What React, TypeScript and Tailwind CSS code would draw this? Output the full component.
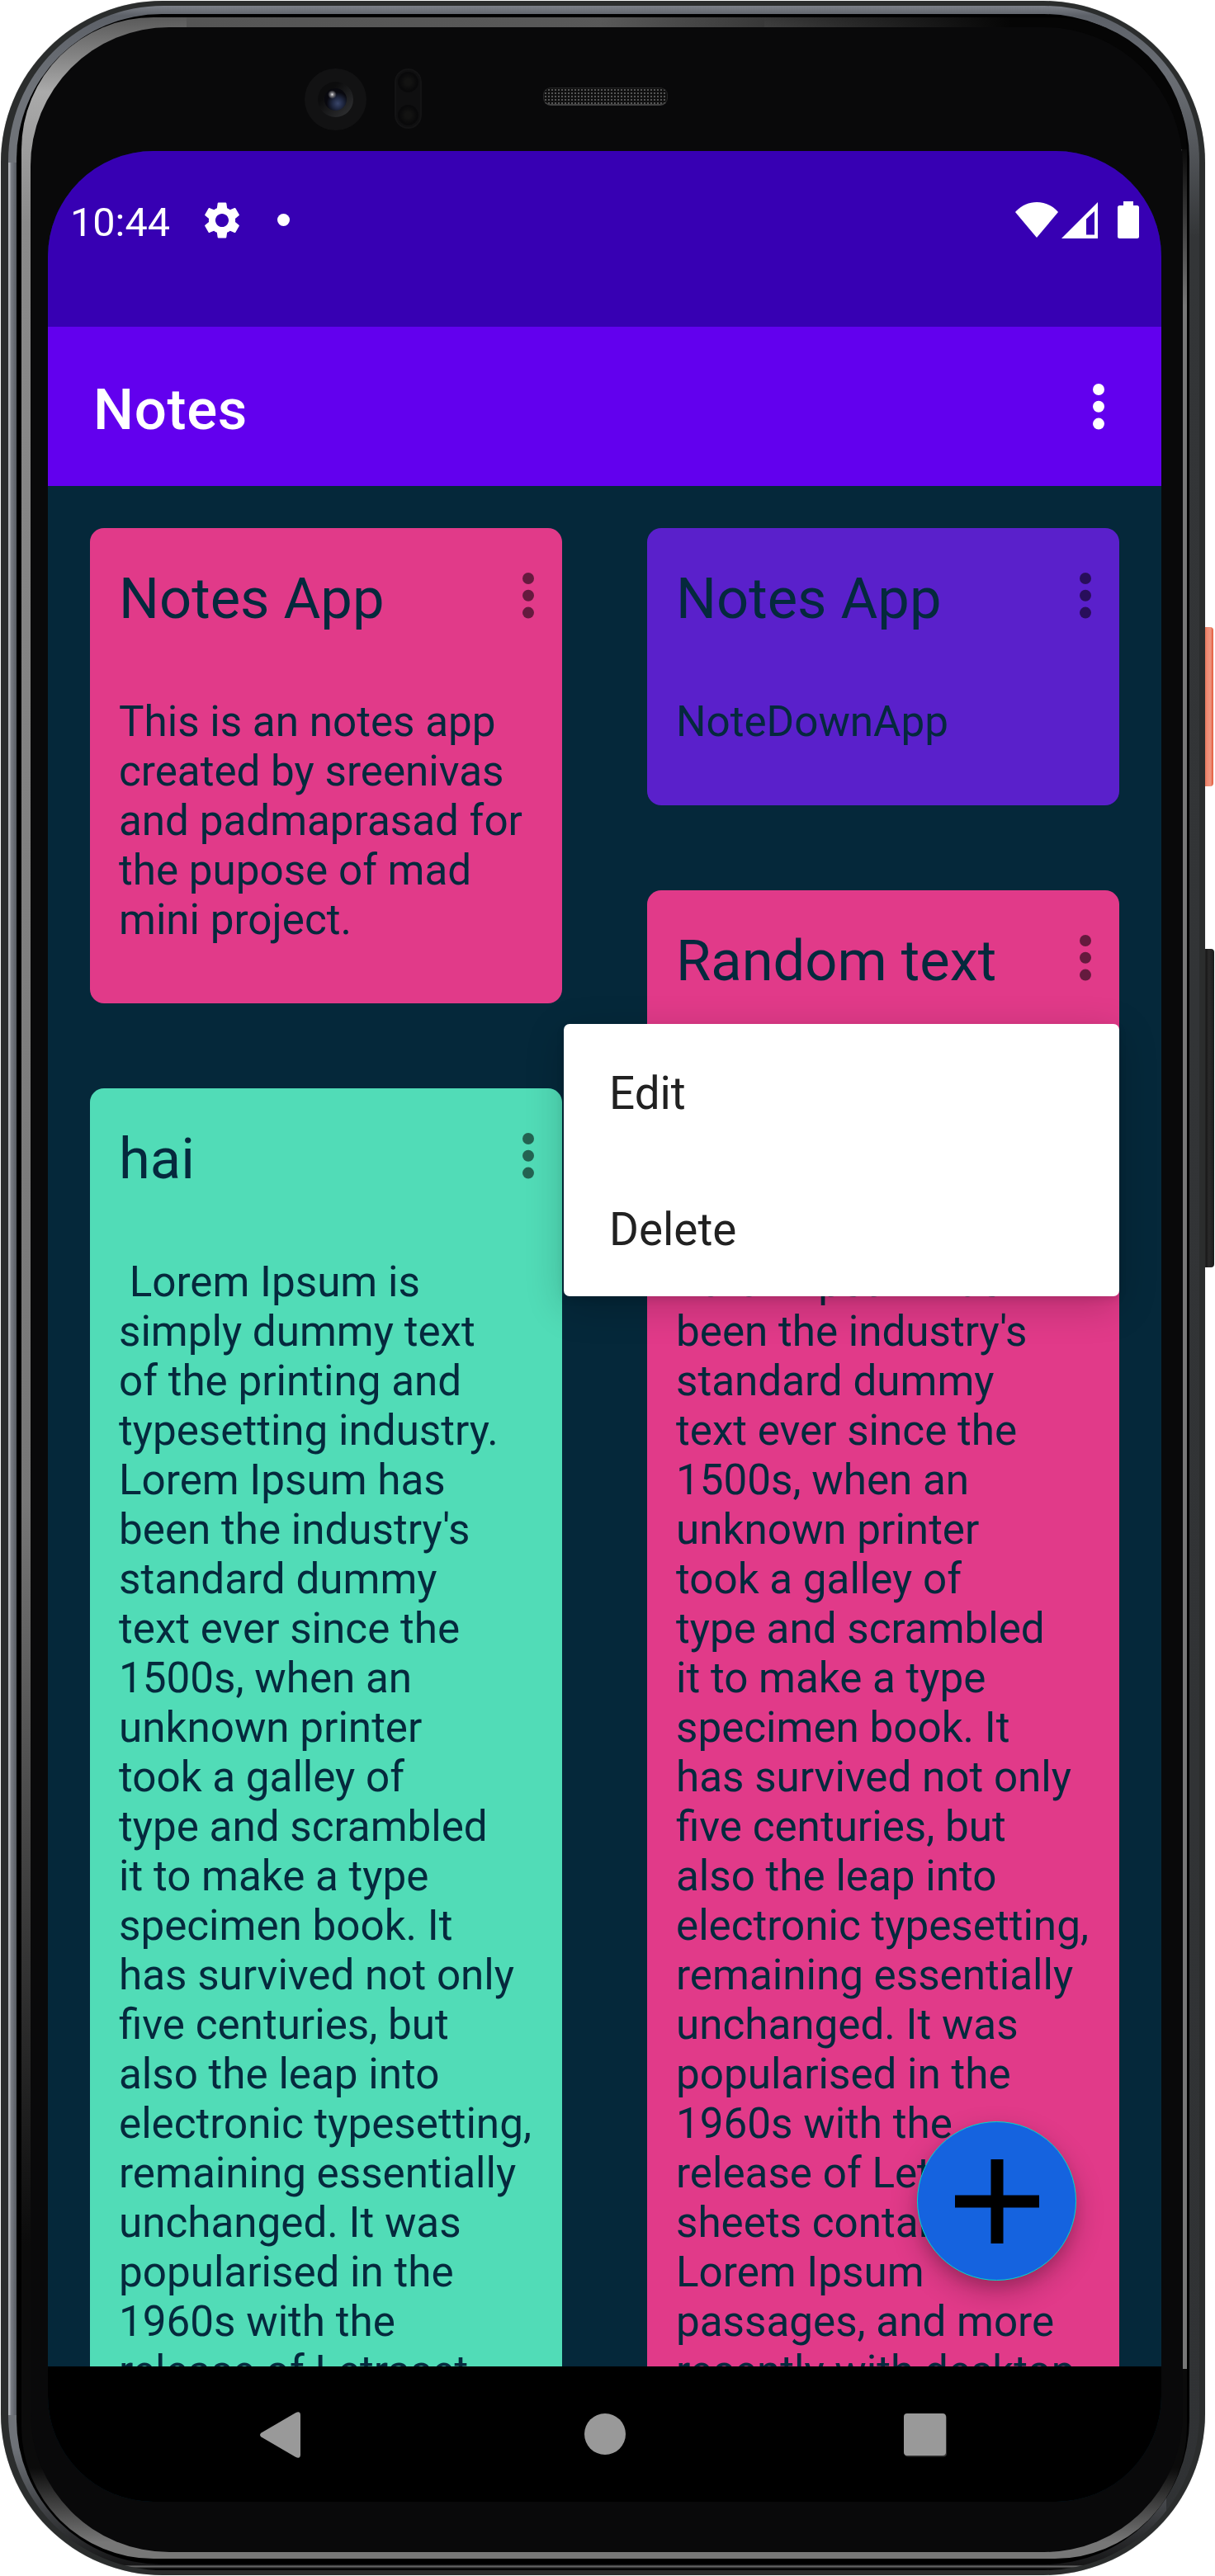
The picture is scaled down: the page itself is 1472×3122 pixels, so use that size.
import React from "react";

const lorem = [
  " Lorem Ipsum is",
  "simply dummy text",
  "of the printing and",
  "typesetting industry.",
  "Lorem Ipsum has",
  "been the industry's",
  "standard dummy",
  "text ever since the",
  "1500s, when an",
  "unknown printer",
  "took a galley of",
  "type and scrambled",
  "it to make a type",
  "specimen book. It",
  "has survived not only",
  "five centuries, but",
  "also the leap into",
  "electronic typesetting,",
  "remaining essentially",
  "unchanged. It was",
  "popularised in the",
  "1960s with the",
  "release of Letraset",
  "sheets containing",
  "Lorem Ipsum",
  "passages, and more",
  "recently with desktop",
];

function Dots({ className }: { className: string }) {
  return (
    <svg viewBox="0 0 14 56" className={className} fill="currentColor">
      <circle cx="7" cy="7" r="7" />
      <circle cx="7" cy="27.8" r="7" />
      <circle cx="7" cy="48.6" r="7" />
    </svg>
  );
}

function NoteCard({ title, lines, color }: { title: string; lines: string[]; color: string }) {
  return (
    <article className={`flex shrink-0 flex-col rounded-[17px] pt-[45px] pb-[71px] pl-[35px] ${color}`}>
      <header className="flex h-20 items-start justify-between pr-[34px]">
        <h2 className="pt-px text-[68.7px] leading-[80px] whitespace-nowrap">{title}</h2>
        <Dots className="mt-[9px] h-14 w-3.5 text-black/55" />
      </header>
      <div className="mt-[80px] text-[51.2px] leading-[60px] whitespace-pre">
        {lines.map((line, i) => (
          <p key={i}>{line}</p>
        ))}
      </div>
    </article>
  );
}

function StatusBar() {
  return (
    <div className="flex h-[213px] shrink-0 items-start bg-[#3700b3] pt-[57px] pl-[27px] text-white">
      <span className="w-[124px] pt-px text-[48.6px] leading-[58px]">10:44</span>
      <svg viewBox="2.6 2.4 18.8 19.2" className="mt-[5px] ml-[39px] h-11 w-[42px]" fill="currentColor">
        <path d="M19.14 12.94c.04-.3.06-.61.06-.94 0-.32-.02-.64-.07-.94l2.03-1.58a.49.49 0 0 0 .12-.61l-1.92-3.32a.488.488 0 0 0-.59-.22l-2.39.96c-.5-.38-1.03-.7-1.62-.94l-.36-2.54a.484.484 0 0 0-.48-.41h-3.84c-.24 0-.43.17-.47.41l-.36 2.54c-.59.24-1.13.57-1.62.94l-2.39-.96c-.22-.08-.47 0-.59.22L2.74 8.87c-.12.21-.08.47.12.61l2.03 1.58c-.05.3-.09.63-.09.94s.02.64.07.94l-2.03 1.58a.49.49 0 0 0-.12.61l1.92 3.32c.12.22.37.29.59.22l2.39-.96c.5.38 1.03.7 1.62.94l.36 2.54c.05.24.24.41.48.41h3.84c.24 0 .44-.17.47-.41l.36-2.54c.59-.24 1.13-.56 1.62-.94l2.39.96c.22.08.47 0 .59-.22l1.92-3.32c.12-.22.07-.47-.12-.61l-2.01-1.58zM12 15.6c-1.98 0-3.6-1.62-3.6-3.6s1.62-3.6 3.6-3.6 3.6 1.62 3.6 3.6-1.62 3.6-3.6 3.6z" />
      </svg>
      <span className="mt-[19px] ml-[46px] size-[15px] rounded-full bg-white" />
      <svg viewBox="0 0 52 43" className="mt-[5px] ml-auto h-[43px] w-[52px]" fill="currentColor">
        <path d="M26 43 0 12C14-4 38-4 52 12Z" />
      </svg>
      <svg viewBox="0 0 44 44" className="mt-[5px] ml-[4px] size-11" fill="currentColor" fillRule="evenodd">
        <path d="M44 0V44H0ZM40 11 30 20.500V39.500H40Z" />
      </svg>
      <svg viewBox="0 0 26 45" className="mt-[4px] mr-[27px] ml-[24px] h-[45px] w-[26px]" fill="currentColor">
        <path d="M7 0H19V5H23.500Q26 5 26 7.500V42.500Q26 45 23.500 45H2.500Q0 45 0 42.500V7.500Q0 5 2.500 5H7Z" />
      </svg>
    </div>
  );
}

function BezelSensors() {
  return (
    <div className="flex h-[150px] shrink-0 items-start pl-[332px]">
      <div className="mt-[50px] flex size-[75px] items-center justify-center rounded-full bg-[#121213]">
        <div className="flex size-[43px] items-center justify-center rounded-full bg-[linear-gradient(135deg,#0c0c0d_30%,#333436)]">
          <div className="size-[27px] rounded-full bg-[radial-gradient(circle_at_35%_28%,#dedee2_0,#77777c_8%,transparent_20%),radial-gradient(circle_at_60%_68%,#394569_0,#1f2740_28%,#08080e_55%)]" />
        </div>
      </div>
      <div className="mt-[50px] ml-[34px] flex h-[73px] w-[33px] flex-col items-center justify-between rounded-full border-2 border-[#131314] bg-[#0f0f10] py-[2px]">
        <span className="size-[25px] rounded-full bg-[radial-gradient(circle,#131312_20%,#09090a_60%)]" />
        <span className="size-[25px] rounded-full bg-[radial-gradient(circle,#131312_20%,#09090a_60%)]" />
      </div>
      <div className="mt-[73px] ml-[147px] h-[22px] w-[151px] rounded-[9px] border border-b-2 border-[#252525] border-b-[#414141] bg-[#101010] bg-[radial-gradient(circle,#555_0.8px,transparent_1.5px)] bg-[length:4px_4px]" />
    </div>
  );
}

function NavBar() {
  return (
    <div className="flex h-[164px] shrink-0 items-start bg-black pt-[55px] pl-[257px]">
      <svg viewBox="0 0 49 56" className="h-14 w-[49px]" fill="#999">
        <path d="M1.500 25.500 43 1.200Q49-1.500 49 4V52Q49 57.500 43 54.800L1.500 30.500Q-1.500 28 1.500 25.500Z" />
      </svg>
      <span className="mt-[2px] ml-[344px] size-[50px] rounded-full bg-[#999]" />
      <span className="mt-[2px] ml-[337px] h-[51px] w-[51px] rounded-[4px] bg-[#999] shadow-[1px_1.500px_0_#333]" />
    </div>
  );
}

export default function App() {
  return (
    <div className="relative h-[3122px] w-[1472px] overflow-hidden bg-white font-[Roboto,sans-serif] text-[#05293d]">
      <div className="absolute top-[760px] left-[1455px] h-[193px] w-[15px] rounded-r-[4px] bg-[linear-gradient(to_right,#e86f50_30%,#ee8a73_50%,#f09680_75%,#e2593a)]" />
      <div className="absolute top-[1150px] left-[1455px] h-[386px] w-[16px] rounded-r-[4px] bg-[linear-gradient(to_right,#111_30%,#2a2a2a_60%,#1b1b1b)]" />

      <div className="relative mt-px ml-px h-[3120px] w-[1459px] rounded-[196px] bg-[#2b2d2d] pt-[6px] pr-[7px] pb-[6px] pl-[9px] shadow-[0_0_1px_0_#a3a5a5]">
        <div className="h-full rounded-[188px] pt-[10px] pr-[12px] pb-[7px] pl-[10px] [background:linear-gradient(to_right,#adb0b5_0,#adb0b5_2px,#7c8088_3px,#555960_10px,transparent_11px)_0_190px/11px_2730px_no-repeat,linear-gradient(to_bottom,transparent,#333537_200px,#303234)_right_80px/40px_3028px_no-repeat,linear-gradient(to_bottom,#7c8088,#5d6168_12px,#6e7278_100px,#6e7278_2960px,#161617_3102px,#777_3103px,#050505_3106px)]">
          <div className="h-full rounded-[176px] bg-black pt-[4px] pr-[3px] pb-[7px] pl-[6px]">
            <div className="h-full rounded-[160px] pt-[12px] pr-[5px] pb-[8px] pl-[11px] [background:linear-gradient(to_right,transparent,#050505_500px)_700px_0/712px_160px_no-repeat,linear-gradient(to_right,#555,#5a5a5a)_200px_0/700px_13px_no-repeat,linear-gradient(to_bottom,#050505_0,#777_200px,#777)_right_150px/6px_2700px_no-repeat,linear-gradient(to_bottom,#5a5a5a_0,#aaa_90px,#8a8a8a_250px,#777_1800px,#0b0b0b_2700px,#0b0b0b_2970px,#777_3060px)]">
              <div className="flex h-full flex-col rounded-[168px] bg-[#09090a]">
                <BezelSensors />
                <main className="relative ml-[21px] flex h-[2849px] w-[1349px] flex-col overflow-hidden rounded-[128px] bg-[#05283a]">
                  <StatusBar />
                  <div className="flex h-[193px] shrink-0 items-center justify-between bg-[#6200ee] pr-[69px] pl-[55px] text-white">
                    <h1 className="pt-[9px] text-[69px] leading-[80px] font-medium tracking-[0.7px]">Notes</h1>
                    <Dots className="mt-px h-14 w-3.5" />
                  </div>
                  <div className="grid min-h-0 flex-1 grid-cols-2 gap-x-[103px] overflow-hidden pt-[51px] pr-[51px] pl-[51px]">
                    <div className="flex flex-col gap-[103px]">
                      <NoteCard
                        title="Notes App"
                        color="bg-[#e13a89]"
                        lines={["This is an notes app", "created by sreenivas", "and padmaprasad for", "the pupose of mad", "mini project."]}
                      />
                      <NoteCard title="hai" color="bg-[#51dcb7]" lines={lorem} />
                    </div>
                    <div className="flex flex-col gap-[103px]">
                      <NoteCard title="Notes App" color="bg-[#5a20cb]" lines={["NoteDownApp"]} />
                      <NoteCard title="Random text" color="bg-[#e13a89]" lines={lorem} />
                    </div>
                  </div>
                  <NavBar />

                  <ul className="absolute top-[1058px] left-[625px] h-[330px] w-[673px] rounded-[7px] bg-white text-[54.800px] leading-[165px] text-[#212121] shadow-[0_12px_48px_rgba(0,0,0,0.2),0_4px_10px_rgba(0,0,0,0.1)]">
                    <li className="h-[165px] pt-[2px] pl-[55px]">Edit</li>
                    <li className="h-[165px] pt-[2px] pl-[55px]">Delete</li>
                  </ul>

                  <button className="absolute top-[2388px] left-[1053px] flex size-[193px] items-center justify-center rounded-full border-[1.500px] border-[#03dac5] bg-[#1563df] shadow-[0_14px_34px_rgba(0,0,0,0.24),0_8px_14px_rgba(0,0,0,0.1)]">
                    <svg viewBox="0 0 102 102" className="size-[102px]">
                      <path d="M51 0V102M0 51H102" stroke="#000" strokeWidth="15" />
                    </svg>
                  </button>
                </main>
              </div>
            </div>
          </div>
        </div>
      </div>
    </div>
  );
}
